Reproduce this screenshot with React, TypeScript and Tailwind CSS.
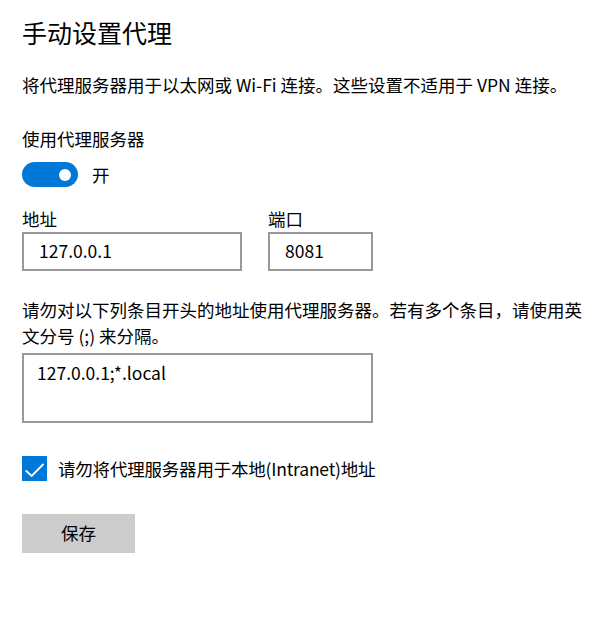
import React from "react";

export default function App() {
  const font = { fontFamily: '"Noto Sans CJK SC", "Noto Sans", sans-serif' };
  return (
    <div className="w-[599px] h-[622px] bg-white text-black px-[22px]" style={font}>
      <div className="pt-[12px] h-[52px] text-[25px] leading-[40px]">手动设置代理</div>
      <div className="mt-[20px] text-[17.5px] leading-[26px] whitespace-nowrap">
        将代理服务器用于以太网或 Wi-Fi 连接。这些设置不适用于 VPN 连接。
      </div>
      <div className="mt-[28px] text-[17.5px] leading-[26px]">使用代理服务器</div>
      <div className="mt-[10px] h-[25px] flex items-center">
        <div className="w-[56px] h-[25px] rounded-full bg-[#0078d7] flex items-center justify-end pr-[7px]">
          <div className="w-[12px] h-[12px] rounded-full bg-white" />
        </div>
        <span className="ml-[14px] text-[17.5px] leading-[25px]">开</span>
      </div>
      <div className="mt-[19px] flex gap-[26px]">
        <div className="flex flex-col">
          <div className="text-[17.5px] leading-[26px]">地址</div>
          <div className="w-[220px] h-[39px] border-2 border-[#999999] flex items-center pl-[15px] text-[17.5px]">
            127.0.0.1
          </div>
        </div>
        <div className="flex flex-col">
          <div className="text-[17.5px] leading-[26px]">端口</div>
          <div className="w-[105px] h-[39px] border-2 border-[#999999] flex items-center pl-[15px] text-[17.5px]">
            8081
          </div>
        </div>
      </div>
      <div className="mt-[26px] text-[17.5px] leading-[26px] whitespace-nowrap">
        请勿对以下列条目开头的地址使用代理服务器。若有多个条目，请使用英
        <br />
        文分号 (;) 来分隔。
      </div>
      <div className="mt-[4px] w-[351px] h-[70px] border-2 border-[#999999] pl-[13px] pt-[5px] text-[17.5px] leading-[26px]">
        127.0.0.1;*.local
      </div>
      <div className="mt-[33px] h-[25px] flex items-center">
        <div className="w-[25px] h-[25px] bg-[#0078d7] flex items-center justify-center">
          <svg width="25" height="25" viewBox="0 0 25 25">
            <polyline points="3.7,14.5 9.7,20 21.5,8" fill="none" stroke="white" strokeWidth="1.8" />
          </svg>
        </div>
        <span className="ml-[11px] text-[17.5px] leading-[25px] tracking-[-0.2px]">请勿将代理服务器用于本地(Intranet)地址</span>
      </div>
      <div className="mt-[33px] w-[113px] h-[39px] bg-[#cccccc] flex items-center justify-center text-[17.5px]">
        保存
      </div>
    </div>
  );
}
